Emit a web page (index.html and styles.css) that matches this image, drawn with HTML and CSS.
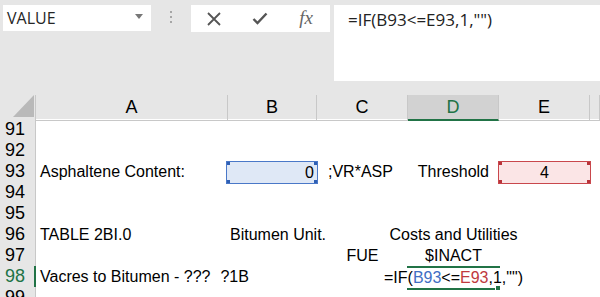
FILE: index.html
```html
<!DOCTYPE html>
<html lang="en">
<head>
    <meta charset="UTF-8">
    <meta name="viewport" content="width=device-width, initial-scale=1.0">
    <title>Sheet - VALUE</title>
    <link rel="stylesheet" href="styles.css">
</head>
<body>

    <div class="toolbar">
        <div class="namebox">
            <span>VALUE</span>
            <svg class="arrow" width="8" height="5" viewBox="0 0 8 5"><path d="M0 0 L8 0 L4 5 Z" fill="#777"/></svg>
        </div>
        <div class="grip"><i></i><i></i><i></i></div>
        <div class="fbuttons">
            <span class="fbtn">
                <svg width="16" height="14" viewBox="0 0 16 14"><path d="M2 1 L14 13 M14 1 L2 13" stroke="#555" stroke-width="1.8" fill="none"/></svg>
            </span>
            <span class="fbtn">
                <svg width="16" height="13" viewBox="0 0 16 13"><path d="M1.5 7 L5.5 11 L14.5 1.5" stroke="#555" stroke-width="2.4" fill="none"/></svg>
            </span>
            <span class="fbtn fx">fx</span>
        </div>
        <div class="formula">=IF(B93&lt;=E93,1,"")</div>
    </div>

    <div class="sheet">
        <div class="row head">
            <div class="corner">
                <svg width="36" height="24" viewBox="0 0 36 24"><path d="M13 22 L34 22 L34 0 Z" fill="#b9b9b9"/></svg>
            </div>
            <div class="colname">A</div>
            <div class="colname">B</div>
            <div class="colname">C</div>
            <div class="colname sel">D</div>
            <div class="colname">E</div>
            <div class="colname"></div>
        </div>

        <div class="row">
            <div class="rownum">91</div>
            <div class="cell"></div><div class="cell"></div><div class="cell"></div><div class="cell"></div><div class="cell"></div><div class="cell"></div>
        </div>
        <div class="row">
            <div class="rownum">92</div>
            <div class="cell"></div><div class="cell"></div><div class="cell"></div><div class="cell"></div><div class="cell"></div><div class="cell"></div>
        </div>
        <div class="row">
            <div class="rownum">93</div>
            <div class="cell">Asphaltene Content:</div>
            <div class="cell right ref-blue">0</div>
            <div class="cell pad-c">;VR*ASP</div>
            <div class="cell right pad-r">Threshold</div>
            <div class="cell center ref-red">4</div>
            <div class="cell"></div>
        </div>
        <div class="row">
            <div class="rownum">94</div>
            <div class="cell"></div><div class="cell"></div><div class="cell"></div><div class="cell"></div><div class="cell"></div><div class="cell"></div>
        </div>
        <div class="row">
            <div class="rownum">95</div>
            <div class="cell"></div><div class="cell"></div><div class="cell"></div><div class="cell"></div><div class="cell"></div><div class="cell"></div>
        </div>
        <div class="row">
            <div class="rownum">96</div>
            <div class="cell">TABLE 2BI.0</div>
            <div class="cell pad-b">Bitumen Unit.</div>
            <div class="cell"></div>
            <div class="cell center">Costs and Utilities</div>
            <div class="cell"></div>
            <div class="cell"></div>
        </div>
        <div class="row">
            <div class="rownum">97</div>
            <div class="cell"></div>
            <div class="cell"></div>
            <div class="cell center">FUE</div>
            <div class="cell center">$INACT</div>
            <div class="cell"></div>
            <div class="cell"></div>
        </div>
        <div class="row">
            <div class="rownum active-row">98</div>
            <div class="cell">Vacres to Bitumen - ??? <span class="tail">?1B</span></div>
            <div class="cell"></div>
            <div class="cell"></div>
            <div class="cell center active"><span class="edit">=IF(<span class="blue">B93</span>&lt;=<span class="red">E93</span>,1,"")</span></div>
            <div class="cell"></div>
            <div class="cell"></div>
        </div>
        <div class="row">
            <div class="rownum">99</div>
            <div class="cell"></div><div class="cell"></div><div class="cell"></div><div class="cell"></div><div class="cell"></div><div class="cell"></div>
        </div>
    </div>

</body>
</html>
```

FILE: styles.css
```css
/* Excel-like sheet view */
body {
    margin: 0;
    background-color: #e6e6e6;
    font-family: "Liberation Sans", Arial, sans-serif;
    color: #000;
    overflow: hidden;
}

/* top bar: name box + formula bar */
.toolbar {
    display: flex;
    align-items: flex-start;
    height: 95px;
    padding: 5px 0 0 3px;
    box-sizing: border-box;
}
.namebox {
    width: 148px;
    height: 26px;
    background-color: #fff;
    display: flex;
    align-items: center;
    justify-content: space-between;
    padding: 0 8px 0 4px;
    box-sizing: border-box;
    font-family: "Open Sans", sans-serif;
    font-size: 16px;
    color: #262626;
}
.arrow { margin-top: -3px; }
.grip {
    width: 40px;
    display: flex;
    flex-direction: column;
    align-items: center;
    gap: 3px;
    padding-top: 6px;
}
.grip i {
    width: 2px;
    height: 2px;
    background-color: #a6a6a6;
}
.fbuttons {
    width: 139px;
    height: 27px;
    background-color: #fff;
    display: flex;
    align-items: center;
}
.fbtn {
    width: 46px;
    display: flex;
    justify-content: center;
    align-items: center;
}
.fx {
    font-family: "Liberation Serif", serif;
    font-style: italic;
    font-size: 19px;
    color: #666;
    margin-top: -2px;
}
.formula {
    flex: 1;
    margin-left: 4px;
    height: 76px;
    background-color: #fff;
    padding: 3px 14px;
    box-sizing: border-box;
    font-family: "Open Sans", sans-serif;
    font-size: 17px;
    color: #222;
}

/* grid */
.row {
    display: grid;
    grid-template-columns: 36px 192px 89px 91px 91px 91px 1fr;
    height: 21px;
    background-color: #fff;
}
.row.head {
    height: 24px;
    background-color: #e6e6e6;
}
.corner {
    border-right: 1px solid #c8c8c8;
    border-bottom: 1px solid #c8c8c8;
    box-sizing: border-box;
}
.corner svg { display: block; }
.colname {
    border-right: 1px solid #c8c8c8;
    border-bottom: 1px solid #c8c8c8;
    box-sizing: border-box;
    text-align: center;
    font-size: 18px;
    line-height: 24px;
}
.colname.sel {
    background-color: #d2d2d2;
    color: #217346;
    border-bottom: 2px solid #217346;
}
.rownum {
    background-color: #e6e6e6;
    border-right: 1px solid #c8c8c8;
    border-bottom: 1px solid #d9d9d9;
    box-sizing: border-box;
    padding-left: 5px;
    font-size: 18px;
    line-height: 21px;
}
.rownum.active-row {
    color: #217346;
    border-right: 2px solid #217346;
}
.cell {
    font-size: 16px;
    line-height: 21px;
    white-space: nowrap;
    padding: 0 4px;
    display: flex;
    min-width: 0;
}
.right { justify-content: flex-end; }
.center { justify-content: center; }
.pad-c { padding-left: 11px; }
.pad-r { padding-right: 10px; }
.pad-b { padding-left: 2px; }
.tail { margin-left: 10px; }

/* referenced cells (range highlight) */
.ref-blue {
    margin: 0 -1px -1px -2px;
    border: 1px solid #4a78c8;
    background:
        linear-gradient(#2e5fb4, #2e5fb4) left top / 3px 3px no-repeat,
        linear-gradient(#2e5fb4, #2e5fb4) right top / 3px 3px no-repeat,
        linear-gradient(#2e5fb4, #2e5fb4) left bottom / 3px 3px no-repeat,
        linear-gradient(#2e5fb4, #2e5fb4) right bottom / 3px 3px no-repeat,
        #dfe8f6;
    padding-right: 3px;
}
.ref-red {
    margin: 0 -1px -1px -1px;
    border: 1px solid #c9474c;
    background:
        linear-gradient(#b8333a, #b8333a) left top / 3px 3px no-repeat,
        linear-gradient(#b8333a, #b8333a) right top / 3px 3px no-repeat,
        linear-gradient(#b8333a, #b8333a) left bottom / 3px 3px no-repeat,
        linear-gradient(#b8333a, #b8333a) right bottom / 3px 3px no-repeat,
        #fbe5e6;
}

/* active cell in edit mode */
.active {
    position: relative;
    z-index: 1;
    margin: 0 -1px -2px -1px;
    border-top: 2px solid #217346;
    border-bottom: 2px solid #217346;
    line-height: 19px;
}
.active::after {
    content: "";
    position: absolute;
    right: -1px;
    bottom: -3px;
    width: 4px;
    height: 4px;
    background-color: #217346;
    border: 1px solid #fff;
}
.edit { padding: 0 2px; }
.blue { color: #3f6fc4; }
.red { color: #c0393e; }
```
